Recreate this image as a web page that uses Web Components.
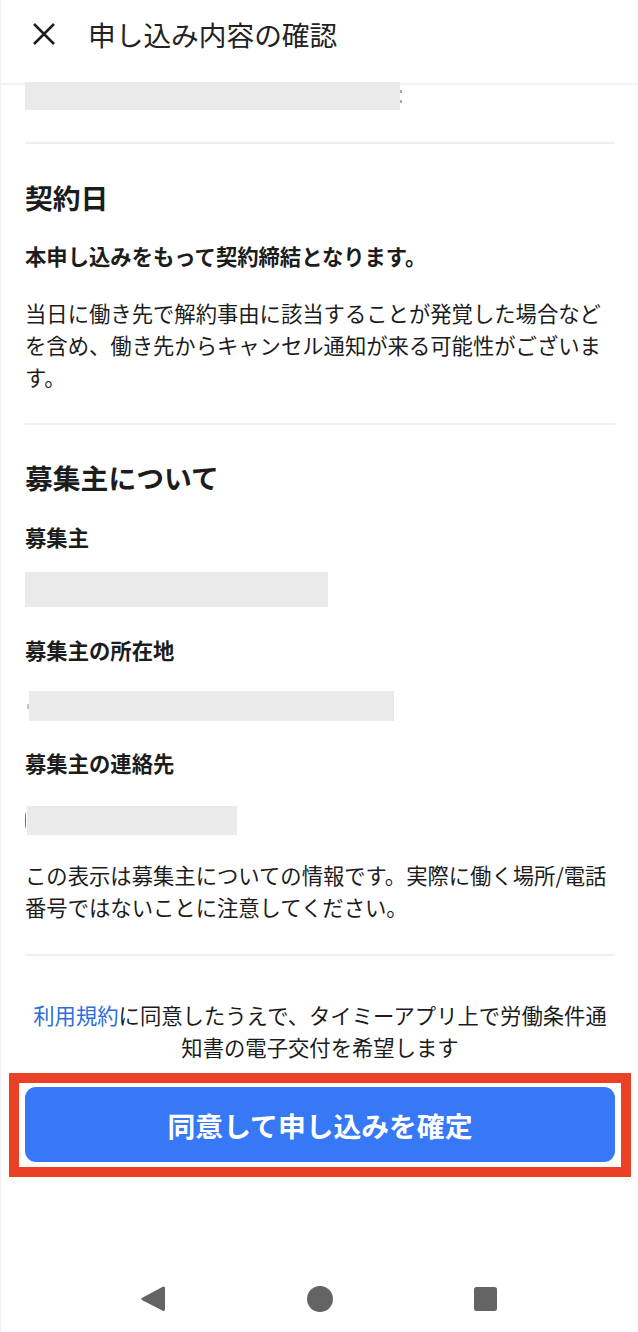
<!DOCTYPE html>
<html lang="ja">
<head>
<meta charset="utf-8">
<title>申し込み内容の確認</title>
<style>
  html, body { margin: 0; padding: 0; background: #fff; }
  body { font-family: "Noto Sans CJK JP", "Noto Sans", sans-serif; color: #1c1c1c; }
</style>
</head>
<body>
<confirm-page>
  <page-header slot="header">申し込み内容の確認</page-header>

  <redact-bar width="375" height="28" tail="colon" style="margin-top:-3px"></redact-bar>
  <page-divider style="margin-top:32px"></page-divider>

  <section-title style="margin-top:33px">契約日</section-title>
  <text-line bold style="margin-top:23px">本申し込みをもって契約締結となります。</text-line>
  <text-line style="margin-top:25px">当日に働き先で解約事由に該当することが発覚した場合などを含め、働き先からキャンセル通知が来る可能性がございます。</text-line>
  <page-divider style="margin-top:30px"></page-divider>

  <section-title style="margin-top:32px">募集主について</section-title>
  <text-line bold style="margin-top:24px">募集主</text-line>
  <redact-bar width="303" height="35" style="margin-top:19px"></redact-bar>
  <text-line bold style="margin-top:27px">募集主の所在地</text-line>
  <redact-bar width="365" height="30" offset="4" head="dot" style="margin-top:25px"></redact-bar>
  <text-line bold style="margin-top:26px">募集主の連絡先</text-line>
  <redact-bar width="210" height="29" offset="2" head="paren" style="margin-top:27px"></redact-bar>
  <text-line style="margin-top:24px">この表示は募集主についての情報です。実際に働く場所/電話番号ではないことに注意してください。</text-line>
  <page-divider style="margin-top:31px"></page-divider>

  <consent-note style="margin-top:43px"><a>利用規約</a>に同意したうえで、タイミーアプリ上で労働条件通知書の電子交付を希望します</consent-note>
  <confirm-button style="margin-top:10px">同意して申し込みを確定</confirm-button>

  <nav-bar slot="footer"></nav-bar>
</confirm-page>

<script>
// ページ全体の枠
class ConfirmPage extends HTMLElement {
  constructor() {
    super();
    this.attachShadow({ mode: 'open' });
    this.shadowRoot.innerHTML = `
      <style>
        :host {
          display: flex;
          flex-direction: column;
          box-sizing: border-box;
          height: 1332px;
          overflow: hidden;
          border-left: 1px solid #f1f1f1;
          background: #fff;
        }
        .content { flex: 1; display: flex; flex-direction: column; }
      </style>
      <slot name="header"></slot>
      <div class="content"><slot></slot></div>
      <slot name="footer"></slot>`;
  }
}

class PageHeader extends HTMLElement {
  constructor() {
    super();
    this.attachShadow({ mode: 'open' });
    this.shadowRoot.innerHTML = `
      <style>
        :host {
          display: flex;
          align-items: center;
          gap: 33px;
          box-sizing: border-box;
          height: 85px;
          padding: 0 0 15px 32px;
          border-bottom: 2px solid #f2f2f2;
          font-size: 27.7px;
          line-height: 40px;
          color: #222;
        }
        svg { display: block; }
      </style>
      <svg width="22" height="22" viewBox="0 0 22 22" fill="none" stroke="#1f1f1f" stroke-width="2.5">
        <path d="M1 1 L21 21 M21 1 L1 21"/>
      </svg>
      <span><slot></slot></span>`;
  }
}

// 個人情報を隠すグレーの帯（head / tail は帯からはみ出した文字の切れ端）
class RedactBar extends HTMLElement {
  constructor() {
    super();
    this.attachShadow({ mode: 'open' });
    const w = this.getAttribute('width');
    const h = this.getAttribute('height');
    const offset = Number(this.getAttribute('offset') || 0);
    const head = this.getAttribute('head');
    const tail = this.getAttribute('tail');
    this.shadowRoot.innerHTML = `
      <style>
        :host { display: flex; align-items: center; margin-left: 24px; }
        .bar { background: #eaeaea; width: ${w}px; height: ${h}px; }
        .lead { width: ${offset}px; display: flex; justify-content: flex-end; }
        .dot { width: 2px; height: 5px; background: #c4c4c4; }
        .paren { width: 2px; height: 17px; border-left: 1px solid #666; border-radius: 100% 0 0 100%; box-sizing: border-box; }
        .colon { width: 2px; height: 13px; margin-left: 0;
          background: linear-gradient(#aaa 0 3px, transparent 3px 10px, #aaa 10px 13px); }
      </style>
      <div class="lead">${head ? `<div class="${head}"></div>` : ''}</div>
      <div class="bar"></div>
      ${tail ? `<div class="${tail}"></div>` : ''}`;
  }
}

class PageDivider extends HTMLElement {
  constructor() {
    super();
    this.attachShadow({ mode: 'open' });
    this.shadowRoot.innerHTML = `
      <style>
        :host { display: block; height: 2px; margin: 0 23px 0 24px; background: #efefef; }
      </style>`;
  }
}

class SectionTitle extends HTMLElement {
  constructor() {
    super();
    this.attachShadow({ mode: 'open' });
    this.shadowRoot.innerHTML = `
      <style>
        :host {
          display: block;
          margin-left: 24px;
          font-size: 27.8px;
          font-weight: 700;
          line-height: 40px;
        }
      </style>
      <slot></slot>`;
  }
}

class TextLine extends HTMLElement {
  constructor() {
    super();
    this.attachShadow({ mode: 'open' });
    this.shadowRoot.innerHTML = `
      <style>
        :host {
          display: block;
          margin: 0 23px 0 24px;
          font-size: 21.33px;
          line-height: 32px;
        }
        :host([bold]) { font-weight: 700; }
      </style>
      <slot></slot>`;
  }
}

class ConsentNote extends HTMLElement {
  constructor() {
    super();
    this.attachShadow({ mode: 'open' });
    this.shadowRoot.innerHTML = `
      <style>
        :host {
          display: block;
          margin: 0 23px 0 24px;
          font-size: 21.33px;
          line-height: 32px;
          text-align: center;
        }
        ::slotted(a) { color: #2b6fdc; }
      </style>
      <slot></slot>`;
  }
}

// 赤枠はスクリーンショット上の注釈
class ConfirmButton extends HTMLElement {
  constructor() {
    super();
    this.attachShadow({ mode: 'open' });
    this.shadowRoot.innerHTML = `
      <style>
        :host {
          display: block;
          box-sizing: border-box;
          width: 622px;
          margin-left: 8px;
          padding: 4px 6px 5px;
          border: 10px solid #ea4025;
        }
        button {
          display: block;
          width: 100%;
          height: 75px;
          padding: 0;
          border: 0;
          border-radius: 11px;
          background: #3778f6;
          color: #fff;
          font: 700 27.8px/40px "Noto Sans CJK JP", "Noto Sans", sans-serif;
        }
      </style>
      <button type="button"><slot></slot></button>`;
  }
}

class NavBar extends HTMLElement {
  constructor() {
    super();
    this.attachShadow({ mode: 'open' });
    this.shadowRoot.innerHTML = `
      <style>
        :host { display: block; height: 46px; }
        .keys { display: flex; align-items: center; height: 26px; margin-left: 140px; }
        svg { display: block; }
      </style>
      <div class="keys">
        <svg width="24" height="26" viewBox="0 0 24 26" fill="#646464" stroke="#646464" stroke-width="3" stroke-linejoin="round">
          <path d="M22.5 2 V23.5 L2 13 Z"/>
        </svg>
        <svg style="margin-left:141.5px" width="26" height="26" viewBox="0 0 26 26" fill="#646464"><circle cx="13" cy="13" r="13"/></svg>
        <svg style="margin-left:141.5px" width="23" height="24" viewBox="0 0 23 24" fill="#646464"><rect width="23" height="24" rx="2.5"/></svg>
      </div>`;
  }
}

customElements.define('confirm-page', ConfirmPage);
customElements.define('page-header', PageHeader);
customElements.define('redact-bar', RedactBar);
customElements.define('page-divider', PageDivider);
customElements.define('section-title', SectionTitle);
customElements.define('text-line', TextLine);
customElements.define('consent-note', ConsentNote);
customElements.define('confirm-button', ConfirmButton);
customElements.define('nav-bar', NavBar);
</script>
</body>
</html>
